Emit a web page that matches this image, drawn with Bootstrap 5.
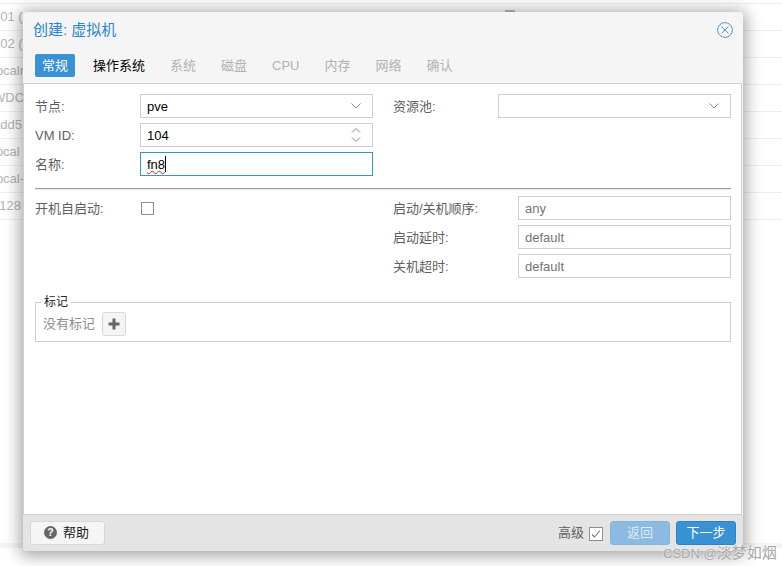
<!DOCTYPE html>
<html lang="zh">
<head>
  <meta charset="UTF-8" />
  <meta name="viewport" content="width=device-width, initial-scale=1.0"/>
  <title>创建: 虚拟机</title>
  <link href="https://cdn.jsdelivr.net/npm/bootstrap@5.3.3/dist/css/bootstrap.min.css" rel="stylesheet" />
  <style>
    html, body { height: 100%; }
    body {
      position: relative;
      overflow: hidden;
      background: #fff;
      font-family: "Liberation Sans", "Noto Sans CJK SC", sans-serif;
      font-size: 13px;
      color: #000;
    }
    .bg-rows { padding-top: 3px; color: #b5b5b5; }
    .bg-row { height: 27px; line-height: 26px; padding-left: 0; text-indent: -7px; border-top: 1px solid #eee; white-space: nowrap; }
    .bg-row:last-of-type { border-bottom: 1px solid #eee; height: 28px; }
    .bg-strip { position: absolute; left: 0; right: 0; top: 543px; height: 5px; background: #f5f5f5; }
    .bg-tick { position: absolute; left: 505px; top: 10px; width: 10px; height: 2px; background: #bbb; }

    .vm-dialog {
      position: absolute; left: 23px; top: 12px; width: 720px; height: 539px;
      background: #f5f5f5; border-radius: 4px;
      box-shadow: 0 2px 16px 3px rgba(0,0,0,.36);
    }
    .vm-head { height: 36px; padding: 8px 10px 0; }
    .vm-title { font-size: 15px; line-height: 20px; color: #2a85c9; }
    .vm-close { width: 16px; height: 16px; margin-top: 2px; }
    .vm-tabs { height: 35px; padding: 6px 12px 0; gap: 11px; }
    .vm-tab { height: 23px; line-height: 23px; padding: 0 7px; border-radius: 2px; color: #b2b2b2; }
    .vm-tab.on { background: #3892d4; color: #fff; }
    .vm-tab.next { color: #000; }
    .vm-body {
      height: 432px; margin-right: 1px; padding: 10px 10px 10px 11px;
      background: #fff; border: 1px solid #cfcfcf;
    }
    .form-cols { gap: 20px; }
    .form-side { width: 338px; gap: 5px; }
    .form-line { height: 24px; }
    .form-name { width: 105px; padding-top: 2px; color: #5f5f5f; flex: none; }
    .form-name.wide { width: 125px; }
    .vm-input {
      width: 233px; height: 24px; padding: 0 6px; line-height: 24px;
      border: 1px solid #cfcfcf; background: #fff; font-size: 13px; color: #000;
    }
    .vm-input.d-flex { padding-top: 2px; }
    .vm-input.hint { width: 213px; color: #757575; }
    .vm-input.focused { border-color: #3892d4; }
    .squiggle { text-decoration: underline wavy #e02020 1px; text-underline-offset: 1px; }
    .caret-mark { display: inline-block; width: 1px; height: 16px; background: #000; vertical-align: -3px; }
    .field-icon { width: 12px; height: 8px; margin: -3px 4px 0 0; }
    .spin-icon { width: 12px; height: 18px; margin: -2px 4px 0 0; }
    .vm-rule { height: 2px; margin: 12px 0 6px; background: #a0a0a0; border-bottom: 1px solid #e8e8e8; background-clip: padding-box; }
    .vm-check { display: block; width: 13px; height: 13px; margin: 0 0 0 1px; border: 1px solid #8e8e8e; background: #fff; flex: none; }
    .tag-box { margin-top: 24px; height: 40px; border: 1px solid #cfcfcf; padding: 9px 7px 0; position: relative; }
    .tag-legend { position: absolute; left: 5px; top: -9px; padding: 0 3px; background: #fff; font-size: 12px; line-height: 16px; color: #222; }
    .tag-empty { color: #8c8c8c; margin-right: 7px; }
    .tag-add { width: 24px; height: 24px; padding: 0; background: #f5f5f5; border: 1px solid #d8d8d8; border-radius: 3px; }
    .vm-foot { height: 36px; background: #e4e4e4; padding: 6px 7px 0; border-radius: 0 0 4px 4px; }
    .vm-btn { height: 24px; padding: 0; font-size: 13px; line-height: 22px; border-radius: 3px; }
    .btn-help { width: 75px; background: #f5f5f5; border: 1px solid #d8d8d8; color: #222; }
    .btn-help svg { width: 13px; height: 13px; margin: 0 6px 0 -2px; vertical-align: -2px; }
    .btn-back { width: 60px; margin-right: 6px; background: #8dbae0; border: 1px solid #86b5dc; color: #dcebf6; }
    .btn-next { width: 60px; background: #3892d4; border: 1px solid #2b84c8; color: #fff; }
    .adv-label { color: #5f5f5f; margin-right: 5px; }
    .adv-check { width: 14px; height: 14px; margin: 6px 7px 0 0; }
    .watermark {
      position: absolute; left: 663px; top: 544px; font-size: 13px; line-height: 17px;
      color: #a6a6a6; text-shadow: 0 0 2px #fff; white-space: nowrap;
    }
    .watermark-name { font-size: 15px; }
  </style>
</head>
<body>
  <div class="bg-rows">
    <div class="bg-row">101 (</div>
    <div class="bg-row">102 (</div>
    <div class="bg-row">localr</div>
    <div class="bg-row">WDC</div>
    <div class="bg-row">add5</div>
    <div class="bg-row">local</div>
    <div class="bg-row">local-</div>
    <div class="bg-row">1128</div>
  </div>
  <div class="bg-strip"></div>
  <div class="bg-tick"></div>

  <div class="vm-dialog d-flex flex-column">
    <div class="vm-head d-flex justify-content-between align-items-start">
      <div class="vm-title">创建: 虚拟机</div>
      <svg class="vm-close" viewBox="0 0 16 16" fill="none" stroke="#4f9ad6">
        <circle cx="8" cy="8" r="7.4"/>
        <path d="M4.5 4.5l7 7M11.5 4.5l-7 7"/>
      </svg>
    </div>
    <div class="vm-tabs d-flex">
      <div class="vm-tab on">常规</div>
      <div class="vm-tab next">操作系统</div>
      <div class="vm-tab">系统</div>
      <div class="vm-tab">磁盘</div>
      <div class="vm-tab">CPU</div>
      <div class="vm-tab">内存</div>
      <div class="vm-tab">网络</div>
      <div class="vm-tab">确认</div>
    </div>
    <div class="vm-body">
      <div class="form-cols d-flex">
        <div class="form-side d-flex flex-column">
          <div class="form-line d-flex align-items-center">
            <span class="form-name">节点:</span>
            <div class="vm-input d-flex justify-content-between align-items-center">pve
              <svg class="field-icon" viewBox="0 0 12 8" fill="none" stroke="#8a8a8a"><path d="M1.5 1.5L6 6l4.5-4.5"/></svg>
            </div>
          </div>
          <div class="form-line d-flex align-items-center">
            <span class="form-name">VM ID:</span>
            <div class="vm-input d-flex justify-content-between align-items-center">104
              <svg class="spin-icon" viewBox="0 0 12 18" fill="none" stroke="#8a8a8a"><path d="M2 6.5L6 2.5l4 4M2 11.5l4 4 4-4"/></svg>
            </div>
          </div>
          <div class="form-line d-flex align-items-center">
            <span class="form-name">名称:</span>
            <div class="vm-input focused"><span class="squiggle">fn8</span><span class="caret-mark"></span></div>
          </div>
        </div>
        <div class="form-side d-flex flex-column">
          <div class="form-line d-flex align-items-center">
            <span class="form-name">资源池:</span>
            <div class="vm-input d-flex justify-content-end align-items-center">
              <svg class="field-icon" viewBox="0 0 12 8" fill="none" stroke="#8a8a8a"><path d="M1.5 1.5L6 6l4.5-4.5"/></svg>
            </div>
          </div>
        </div>
      </div>

      <div class="vm-rule"></div>

      <div class="form-cols d-flex">
        <div class="form-side d-flex flex-column">
          <div class="form-line d-flex align-items-center">
            <span class="form-name">开机自启动:</span>
            <span class="vm-check"></span>
          </div>
        </div>
        <div class="form-side d-flex flex-column">
          <div class="form-line d-flex align-items-center">
            <span class="form-name wide">启动/关机顺序:</span>
            <div class="vm-input hint">any</div>
          </div>
          <div class="form-line d-flex align-items-center">
            <span class="form-name wide">启动延时:</span>
            <div class="vm-input hint">default</div>
          </div>
          <div class="form-line d-flex align-items-center">
            <span class="form-name wide">关机超时:</span>
            <div class="vm-input hint">default</div>
          </div>
        </div>
      </div>

      <div class="tag-box d-flex align-items-start">
        <span class="tag-legend">标记</span>
        <span class="tag-empty form-line d-flex align-items-center">没有标记</span>
        <button type="button" class="tag-add btn d-flex align-items-center justify-content-center">
          <svg width="12" height="12" viewBox="0 0 12 12" fill="#666"><path d="M4.5 0.5h3v4h4v3h-4v4h-3v-4h-4v-3h4z"/></svg>
        </button>
      </div>
    </div>
    <div class="vm-foot d-flex justify-content-between">
      <button type="button" class="vm-btn btn-help btn">
        <svg viewBox="0 0 13 13"><circle cx="6.5" cy="6.5" r="6.5" fill="#666"/><text x="6.5" y="10.2" text-anchor="middle" font-size="10.5" font-weight="700" font-family="Liberation Sans" fill="#fff">?</text></svg>帮助
      </button>
      <div class="d-flex align-items-start">
        <span class="adv-label form-line d-flex align-items-center">高级</span>
        <svg class="adv-check" viewBox="0 0 14 14" fill="none">
          <rect x=".5" y=".5" width="13" height="13" fill="#fff" stroke="#8e8e8e"/>
          <path d="M3 7.5l2.5 2.5L11 3.5" stroke="#777" stroke-width="1.1"/>
        </svg>
        <button type="button" class="vm-btn btn-back btn">返回</button>
        <button type="button" class="vm-btn btn-next btn">下一步</button>
      </div>
    </div>
  </div>
  <div class="watermark">CSDN @<span class="watermark-name">淡梦如烟</span></div>

  <script src="https://cdn.jsdelivr.net/npm/bootstrap@5.3.3/dist/js/bootstrap.bundle.min.js"></script>
</body>
</html>
